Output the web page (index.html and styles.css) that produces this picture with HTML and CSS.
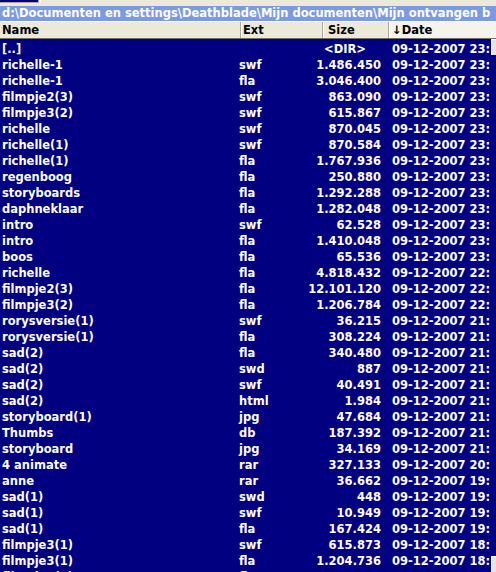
FILE: index.html
```html
<!DOCTYPE html>
<html>
<head>
<meta charset="utf-8">
<link rel="stylesheet" href="styles.css">
</head>
<body>
<div class="panel">
  <div class="topstrip"><div class="drivebar"></div></div>
  <div class="pathbar">d:\Documenten en settings\Deathblade\Mijn documenten\Mijn ontvangen b</div>
  <div class="header">
    <div class="hcell hname">Name</div>
    <div class="hcell hext">Ext</div>
    <div class="hcell hsize">Size</div>
    <div class="hcell hdate">↓Date</div>
  </div>
  <div class="listwrap">
    <div class="list">
      <div class="row"><span>[..]</span><span></span><span class="size dir">&lt;DIR&gt;</span><span>09-12-2007 23:</span></div>
      <div class="row"><span>richelle-1</span><span>swf</span><span class="size">1.486.450</span><span>09-12-2007 23:</span></div>
      <div class="row"><span>richelle-1</span><span>fla</span><span class="size">3.046.400</span><span>09-12-2007 23:</span></div>
      <div class="row"><span>filmpje2(3)</span><span>swf</span><span class="size">863.090</span><span>09-12-2007 23:</span></div>
      <div class="row"><span>filmpje3(2)</span><span>swf</span><span class="size">615.867</span><span>09-12-2007 23:</span></div>
      <div class="row"><span>richelle</span><span>swf</span><span class="size">870.045</span><span>09-12-2007 23:</span></div>
      <div class="row"><span>richelle(1)</span><span>swf</span><span class="size">870.584</span><span>09-12-2007 23:</span></div>
      <div class="row"><span>richelle(1)</span><span>fla</span><span class="size">1.767.936</span><span>09-12-2007 23:</span></div>
      <div class="row"><span>regenboog</span><span>fla</span><span class="size">250.880</span><span>09-12-2007 23:</span></div>
      <div class="row"><span>storyboards</span><span>fla</span><span class="size">1.292.288</span><span>09-12-2007 23:</span></div>
      <div class="row"><span>daphneklaar</span><span>fla</span><span class="size">1.282.048</span><span>09-12-2007 23:</span></div>
      <div class="row"><span>intro</span><span>swf</span><span class="size">62.528</span><span>09-12-2007 23:</span></div>
      <div class="row"><span>intro</span><span>fla</span><span class="size">1.410.048</span><span>09-12-2007 23:</span></div>
      <div class="row"><span>boos</span><span>fla</span><span class="size">65.536</span><span>09-12-2007 23:</span></div>
      <div class="row"><span>richelle</span><span>fla</span><span class="size">4.818.432</span><span>09-12-2007 22:</span></div>
      <div class="row"><span>filmpje2(3)</span><span>fla</span><span class="size">12.101.120</span><span>09-12-2007 22:</span></div>
      <div class="row"><span>filmpje3(2)</span><span>fla</span><span class="size">1.206.784</span><span>09-12-2007 22:</span></div>
      <div class="row"><span>rorysversie(1)</span><span>swf</span><span class="size">36.215</span><span>09-12-2007 21:</span></div>
      <div class="row"><span>rorysversie(1)</span><span>fla</span><span class="size">308.224</span><span>09-12-2007 21:</span></div>
      <div class="row"><span>sad(2)</span><span>fla</span><span class="size">340.480</span><span>09-12-2007 21:</span></div>
      <div class="row"><span>sad(2)</span><span>swd</span><span class="size">887</span><span>09-12-2007 21:</span></div>
      <div class="row"><span>sad(2)</span><span>swf</span><span class="size">40.491</span><span>09-12-2007 21:</span></div>
      <div class="row"><span>sad(2)</span><span>html</span><span class="size">1.984</span><span>09-12-2007 21:</span></div>
      <div class="row"><span>storyboard(1)</span><span>jpg</span><span class="size">47.684</span><span>09-12-2007 21:</span></div>
      <div class="row"><span>Thumbs</span><span>db</span><span class="size">187.392</span><span>09-12-2007 21:</span></div>
      <div class="row"><span>storyboard</span><span>jpg</span><span class="size">34.169</span><span>09-12-2007 21:</span></div>
      <div class="row"><span>4 animate</span><span>rar</span><span class="size">327.133</span><span>09-12-2007 20:</span></div>
      <div class="row"><span>anne</span><span>rar</span><span class="size">36.662</span><span>09-12-2007 19:</span></div>
      <div class="row"><span>sad(1)</span><span>swd</span><span class="size">448</span><span>09-12-2007 19:</span></div>
      <div class="row"><span>sad(1)</span><span>swf</span><span class="size">10.949</span><span>09-12-2007 19:</span></div>
      <div class="row"><span>sad(1)</span><span>fla</span><span class="size">167.424</span><span>09-12-2007 19:</span></div>
      <div class="row"><span>filmpje3(1)</span><span>swf</span><span class="size">615.873</span><span>09-12-2007 18:</span></div>
      <div class="row"><span>filmpje3(1)</span><span>fla</span><span class="size">1.204.736</span><span>09-12-2007 18:</span></div>
      <div class="row"><span>filmpje2(1)</span><span>fla</span><span class="size">1.101.824</span><span>09-12-2007 18:</span></div>
    </div>
    <div class="scrollbar">
      <div class="sbtn"></div>
      <div class="strack"></div>
      <div class="sbtn"></div>
    </div>
  </div>
</div>
</body>
</html>
```
FILE: styles.css
```css
html, body {
  margin: 0;
  padding: 0;
  width: 496px;
  height: 572px;
  overflow: hidden;
  background: #000080;
}
.panel {
  font-family: "DejaVu Sans", Verdana, sans-serif;
  font-weight: bold;
  font-size: 11.5px;
  display: flex;
  flex-direction: column;
  height: 572px;
}
.topstrip {
  height: 6px;
  background: #ECE9D8;
  display: flex;
}
.drivebar {
  width: 38px;
  height: 2px;
  background: #000080;
  border-right: 1px solid #ACA899;
  border-bottom: 1px solid #ACA899;
  box-shadow: 2px 0 0 #ffffff;
}
.pathbar {
  height: 15px;
  line-height: 15px;
  background: #7C9AE2;
  color: #ffffff;
  padding-left: 2px;
  white-space: nowrap;
  overflow: hidden;
  border-bottom: 1px solid #ffffff;
}
.header {
  height: 16px;
  display: grid;
  grid-template-columns: 241px 82px 66px 1fr;
  background: #ECE9D8;
  color: #000000;
  border-bottom: 1px solid #716F64;
}
.hcell {
  line-height: 16px;
  padding-left: 2px;
  border-right: 1px solid #ACA899;
  box-shadow: inset 1px 0 0 #ffffff;
  white-space: nowrap;
  overflow: hidden;
}
.hname {
  box-shadow: none;
}
.hsize {
  padding-left: 5px;
}
.hdate {
  border-right: none;
  background: #F4F3EC;
  padding-left: 3px;
}
.listwrap {
  flex: 1;
  display: flex;
  min-height: 0;
}
.list {
  flex: 1;
  padding-top: 2px;
  overflow: hidden;
  color: #ffffff;
}
.row {
  display: grid;
  grid-template-columns: 238px 54px 89px 1fr;
  height: 16px;
  line-height: 16px;
  white-space: nowrap;
}
.row span {
  overflow: hidden;
  padding-left: 2px;
}
.row span:nth-child(2) {
  padding-left: 1px;
}
.row .size {
  text-align: right;
  padding-left: 0;
  padding-right: 0;
}
.row span:nth-child(4) {
  padding-left: 11px;
  overflow: hidden;
}
.row .dir {
  padding-right: 15px;
}
.scrollbar {
  width: 5px;
  display: flex;
  flex-direction: column;
}
.sbtn {
  height: 16px;
  background: #E8E6DC;
  box-shadow: inset 1px 1px 0 #ffffff;
}
.strack {
  flex: 1;
  background: #000080;
}
```
